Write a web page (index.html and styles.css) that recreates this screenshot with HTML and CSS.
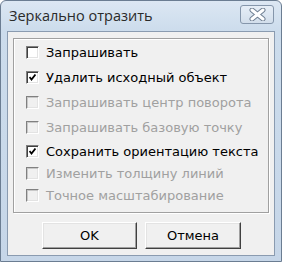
FILE: index.html
```html
<!DOCTYPE html>
<html lang="ru">
<head>
  <meta charset="UTF-8" />
  <title>Зеркально отразить</title>
  <link rel="stylesheet" href="styles.css">
</head>
<body>
  <div class="window">
    <div class="titlebar">
      <span class="title">Зеркально отразить</span>
      <div class="close-btn">
        <svg width="17" height="13" viewBox="0 0 17 13">
          <path d="M3 2 L14 11 M14 2 L3 11" stroke="#6f7f92" stroke-width="5" stroke-linecap="round"/>
          <path d="M3 2 L14 11 M14 2 L3 11" stroke="#ffffff" stroke-width="3" stroke-linecap="round"/>
        </svg>
      </div>
    </div>

    <div class="client">
      <div class="groupbox">
        <div class="row">
          <span class="check"></span>
          <span class="label">Запрашивать</span>
        </div>
        <div class="row">
          <span class="check checked"><svg width="7" height="7" viewBox="0 0 7 7"><path d="M0.5 3 L2.5 5.5 L6.5 0.5" stroke="#000" stroke-width="1.8" fill="none"/></svg></span>
          <span class="label">Удалить исходный объект</span>
        </div>
        <div class="row disabled">
          <span class="check"></span>
          <span class="label">Запрашивать центр поворота</span>
        </div>
        <div class="row disabled">
          <span class="check"></span>
          <span class="label">Запрашивать базовую точку</span>
        </div>
        <div class="row short">
          <span class="check checked"><svg width="7" height="7" viewBox="0 0 7 7"><path d="M0.5 3 L2.5 5.5 L6.5 0.5" stroke="#000" stroke-width="1.8" fill="none"/></svg></span>
          <span class="label">Сохранить ориентацию текста</span>
        </div>
        <div class="row short disabled">
          <span class="check"></span>
          <span class="label">Изменить толщину линий</span>
        </div>
        <div class="row short disabled">
          <span class="check"></span>
          <span class="label">Точное масштабирование</span>
        </div>
      </div>

      <div class="buttons">
        <button class="btn btn-ok">OK</button>
        <button class="btn btn-cancel">Отмена</button>
      </div>
    </div>
  </div>
</body>
</html>
```

FILE: styles.css
```css
body {
  margin: 0;
  background: #ffffff;
  font-family: "DejaVu Sans", sans-serif;
}

.window {
  width: 282px;
  height: 262px;
  box-sizing: border-box;
  display: flex;
  flex-direction: column;
  border: 1px solid #6b7d92;
  border-radius: 6px 6px 0 0;
  background: linear-gradient(to bottom, #dce7f3 0px, #ccdcec 30px, #c6d6e8 100%);
  padding: 0 6px 5px 6px;
}

.titlebar {
  height: 30px;
  display: flex;
  align-items: center;
  padding-left: 2px;
  padding-right: 1px;
}

.title {
  font-family: "Open Sans", sans-serif;
  font-size: 14.5px;
  color: #2a2a2a;
  margin-top: -1px;
}

.close-btn {
  margin-left: auto;
  width: 34px;
  height: 19px;
  box-sizing: border-box;
  border: 1px solid #8596ab;
  border-radius: 3px;
  background: linear-gradient(to bottom, #e6eef7, #d2deeb);
  display: flex;
  align-items: center;
  justify-content: center;
  margin-top: -4px;
}

.client {
  flex: 1;
  background: #f0f0f0;
  border: 1px solid #8a9bb0;
  padding: 6px 5px 0 5px;
}

.groupbox {
  height: 175px;
  box-sizing: border-box;
  border: 1px solid #a0a0a0;
  box-shadow: inset 1px 1px 0 #ffffff, 1px 1px 0 #ffffff;
  padding-top: 1px;
}

.row {
  height: 25px;
  display: flex;
  align-items: center;
  padding-left: 12px;
  font-size: 13px;
  color: #000000;
}

.row.short {
  height: 22px;
}

.check {
  width: 13px;
  height: 13px;
  box-sizing: border-box;
  border: 1px solid;
  border-color: #808080 #ffffff #ffffff #808080;
  box-shadow: inset 1px 1px 0 #404040, inset -1px -1px 0 #e3e3e3;
  background: #ffffff;
  display: flex;
  align-items: center;
  justify-content: center;
  margin-right: 7px;
}

.row.disabled {
  color: #a0a0a0;
}

.row.disabled .check {
  background: #f0f0f0;
  box-shadow: inset 1px 1px 0 #c8c8c8, inset -1px -1px 0 #e3e3e3;
}

.buttons {
  display: flex;
  gap: 8px;
  padding-left: 29px;
  margin-top: 9px;
}

.btn {
  height: 27px;
  box-sizing: border-box;
  font-family: "DejaVu Sans", sans-serif;
  font-size: 13px;
  color: #000000;
  background: #f0f0f0;
  border: 1px solid;
  border-color: #ffffff #404040 #404040 #ffffff;
  box-shadow: inset -1px -1px 0 #a0a0a0, inset 1px 1px 0 #e3e3e3;
  padding: 0;
}

.btn-ok {
  width: 95px;
}

.btn-cancel {
  width: 96px;
}
```
